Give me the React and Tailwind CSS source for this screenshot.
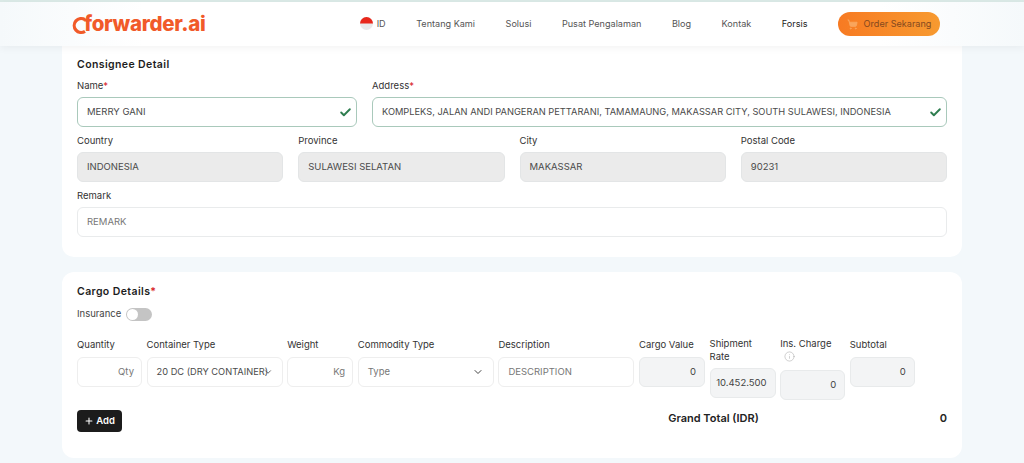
import React from "react";
import { Check, ChevronDown, Plus, Info, ShoppingCart } from "lucide-react";

const font = "font-['Inter','Liberation_Sans',sans-serif]";

function Field({ label, req, children, className = "" }) {
  return (
    <div className={`flex flex-col ${className}`}>
      <label className="h-[13px] mb-[5px] text-[9.5px] leading-[13px] text-[#333]">
        {label}
        {req && <span className="text-[#d81f2a]">*</span>}
      </label>
      {children}
    </div>
  );
}

function Box({ children, valid, gray, right, muted, className = "" }) {
  const border = valid ? "border-[#a9c9bb]" : gray ? "border-[#e3e5e6]" : "border-[#e9ebec]";
  const bg = gray ? "bg-[#ebebeb]" : "bg-white";
  return (
    <div className={`h-[30px] flex items-center rounded-[6px] border ${border} ${bg} px-[9px] text-[9.5px] ${muted ? "text-[#777]" : "text-[#4a4a4a]"} ${right ? "justify-end !px-[7px]" : "justify-between"} ${className}`}>
      {children}
      {valid && <Check size={13} strokeWidth={3.5} className="text-[#2e7d4f] -mr-[5px] shrink-0" />}
    </div>
  );
}

function CargoField({ label, children, width, labelClass = "mb-[6px]" }) {
  return (
    <div className={`flex flex-col ${width}`}>
      <div className={`text-[9.5px] leading-[13px] text-[#333] ${labelClass}`}>{label}</div>
      {children}
    </div>
  );
}

function Readonly({ children }) {
  return (
    <div className="h-[30px] flex items-center justify-end rounded-[6px] border border-[#e8eaeb] bg-[#f3f4f5] px-[8px] text-[9.5px] text-[#444]">
      {children}
    </div>
  );
}

export default function App() {
  return (
    <div className={`${font} w-[1024px] h-[463px] overflow-hidden bg-[#f3f8fb]`}>
      <div className="h-[2px] bg-[#dbeae7]" />
      <header className="relative z-10 h-[44px] flex items-center bg-[linear-gradient(90deg,#f5f9fb_0%,#ffffff_14%,#ffffff_86%,#f5f9fb_100%)] shadow-[0_2px_8px_rgba(0,0,0,0.05)]">
        <div className="ml-[70px] flex items-center text-[#f15a29]">
          <svg width="17" height="22" viewBox="0 0 17 22" className="-mr-[3px]">
            <path d="M15 6.6A7 7 0 1 0 15 18.4" fill="none" stroke="#f15a29" strokeWidth="3.2" />
          </svg>
          <span className="text-[20.5px] leading-none font-extrabold tracking-[-0.3px]">forwarder.ai</span>
        </div>
        <nav className="ml-auto mr-[84px] flex items-center gap-[30.5px] text-[9.1px] text-[#555]">
          <span className="flex items-center gap-[4px]">
            <svg width="13" height="13" viewBox="0 0 13 13">
              <circle cx="6.5" cy="6.5" r="6.5" fill="#e9e9e9" />
              <path d="M0 6.5a6.5 6.5 0 0 1 13 0z" fill="#e8271b" />
            </svg>
            ID
          </span>
          <span>Tentang Kami</span>
          <span>Solusi</span>
          <span>Pusat Pengalaman</span>
          <span>Blog</span>
          <span>Kontak</span>
          <span className="text-[#222]">Forsis</span>
          <span className="h-[24px] w-[102px] flex items-center justify-center gap-[6px] rounded-full bg-gradient-to-r from-[#f77a22] to-[#f79a30] text-[#85491f]">
            <ShoppingCart size={11} className="text-[#f9a55c]" fill="#f9a55c" />
            Order Sekarang
          </span>
        </nav>
      </header>

      <section className="mx-[62px] h-[211px] rounded-b-[12px] bg-white px-[15px] pt-[12px] pb-[20px]">
        <h2 className="h-[13px] mb-[8px] text-[10.5px] leading-[13px] font-semibold tracking-[0.4px] text-[#1d1d1d]">Consignee Detail</h2>
        <div className="flex flex-col gap-[7px]">
          <div className="grid grid-cols-[280px_575px] gap-[15px]">
            <Field label="Name" req><Box valid>MERRY GANI</Box></Field>
            <Field label="Address" req>
              <Box valid className="!text-[9.27px]">KOMPLEKS, JALAN ANDI PANGERAN PETTARANI, TAMAMAUNG, MAKASSAR CITY, SOUTH SULAWESI, INDONESIA</Box>
            </Field>
          </div>
          <div className="grid grid-cols-4 gap-[15px]">
            <Field label="Country"><Box gray>INDONESIA</Box></Field>
            <Field label="Province"><Box gray>SULAWESI SELATAN</Box></Field>
            <Field label="City"><Box gray>MAKASSAR</Box></Field>
            <Field label="Postal Code"><Box gray>90231</Box></Field>
          </div>
          <Field label="Remark"><Box muted>REMARK</Box></Field>
        </div>
      </section>

      <section className="mx-[62px] mt-[15px] h-[186px] rounded-[12px] bg-white px-[15px] pt-[13px]">
        <h2 className="h-[13px] text-[10.5px] leading-[13px] font-semibold tracking-[0.4px] text-[#1d1d1d]">
          Cargo Details<span className="text-[#d81f2a]">*</span>
        </h2>
        <div className="mt-[10px] h-[13px] flex items-center gap-[5px] text-[9.5px] text-[#444]">
          Insurance
          <span className="h-[13px] w-[26px] flex items-center rounded-full bg-[#c4c4c4] pl-[1px]">
            <span className="h-[11px] w-[11px] rounded-full bg-white" />
          </span>
        </div>
        <div className="mt-[17px] flex items-start gap-[4.6px]">
          <CargoField label="Quantity" width="w-[65px]">
            <Box right muted className="!border-[#eeeeee]">Qty</Box>
          </CargoField>
          <CargoField label="Container Type" width="w-[136px]">
            <Box className="!border-[#eeeeee] !justify-start whitespace-nowrap !text-[9.25px]">
              <span className="shrink-0">20 DC (DRY CONTAINER)</span>
              <ChevronDown size={10} className="-ml-[5px] shrink-0" />
            </Box>
          </CargoField>
          <CargoField label="Weight" width="w-[66px]">
            <Box right muted className="!border-[#eeeeee]">Kg</Box>
          </CargoField>
          <CargoField label="Commodity Type" width="w-[136px]">
            <Box muted className="!border-[#eeeeee]">
              Type
              <ChevronDown size={12} className="text-[#444] shrink-0" />
            </Box>
          </CargoField>
          <CargoField label="Description" width="w-[136px]">
            <Box muted className="!border-[#eeeeee]">DESCRIPTION</Box>
          </CargoField>
          <CargoField label="Cargo Value" width="w-[66px]"><Readonly>0</Readonly></CargoField>
          <CargoField
            label={<>Shipment<br />Rate</>}
            width="w-[66px]"
            labelClass="-mt-[1px] mb-[5px]"
          >
            <Readonly>10.452.500</Readonly>
          </CargoField>
          <CargoField
            label={
              <>
                Ins. Charge
                <Info size={11} strokeWidth={1} className="mx-[4px] mt-[1px] block text-[#999]" />
              </>
            }
            width="w-[65px]"
            labelClass="-mt-[1px] mb-[8px]"
          >
            <Readonly>0</Readonly>
          </CargoField>
          <CargoField label="Subtotal" width="w-[65px]"><Readonly>0</Readonly></CargoField>
        </div>
        <div className="mt-[10px] flex items-start">
          <button className="h-[22px] w-[45px] flex items-center justify-center gap-[2px] rounded-[4px] bg-[#1c1c1c] text-[9.5px] font-semibold text-white">
            <Plus size={10} strokeWidth={2.5} />
            Add
          </button>
          <span className="ml-auto text-[11px] leading-[16px] font-semibold text-[#222]">Grand Total (IDR)</span>
          <span className="ml-[181px] text-[11px] leading-[16px] font-semibold text-[#222]">0</span>
        </div>
      </section>
    </div>
  );
}
